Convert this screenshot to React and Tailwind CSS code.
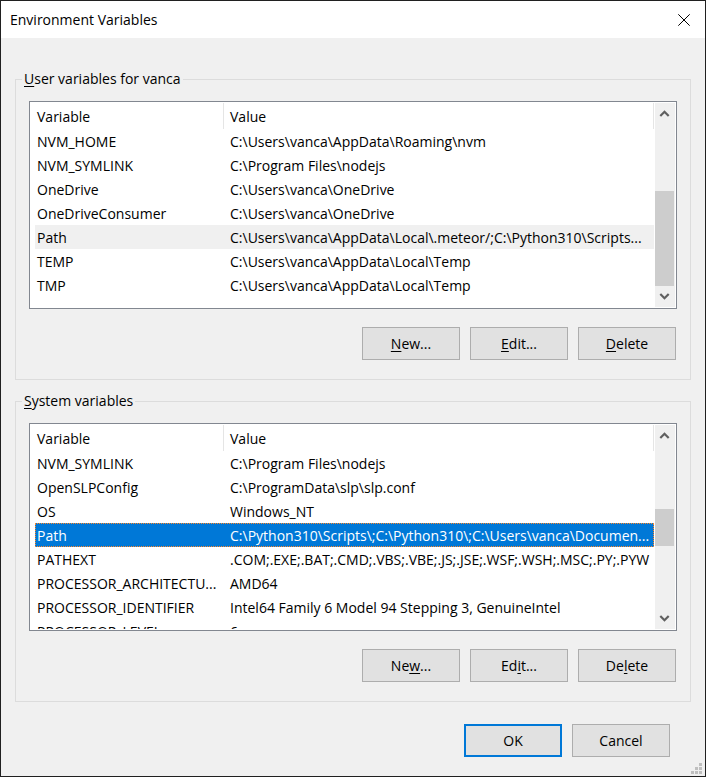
import { useId } from "react";

const userVariables = [
  ["NVM_HOME", "C:\\Users\\vanca\\AppData\\Roaming\\nvm"],
  ["NVM_SYMLINK", "C:\\Program Files\\nodejs"],
  ["OneDrive", "C:\\Users\\vanca\\OneDrive"],
  ["OneDriveConsumer", "C:\\Users\\vanca\\OneDrive"],
  ["Path", "C:\\Users\\vanca\\AppData\\Local\\.meteor/;C:\\Python310\\Scripts..."],
  ["TEMP", "C:\\Users\\vanca\\AppData\\Local\\Temp"],
  ["TMP", "C:\\Users\\vanca\\AppData\\Local\\Temp"],
];

const systemVariables = [
  ["NVM_SYMLINK", "C:\\Program Files\\nodejs"],
  ["OpenSLPConfig", "C:\\ProgramData\\slp\\slp.conf"],
  ["OS", "Windows_NT"],
  ["Path", "C:\\Python310\\Scripts\\;C:\\Python310\\;C:\\Users\\vanca\\Documen..."],
  ["PATHEXT", ".COM;.EXE;.BAT;.CMD;.VBS;.VBE;.JS;.JSE;.WSF;.WSH;.MSC;.PY;.PYW"],
  ["PROCESSOR_ARCHITECTU...", "AMD64"],
  ["PROCESSOR_IDENTIFIER", "Intel64 Family 6 Model 94 Stepping 3, GenuineIntel"],
  ["PROCESSOR_LEVEL", "6"],
];

// Underlines the access key of a label, e.g. hotkey 2 in "Edit..." marks the "i".
function Mnemonic({ text, hotkey }) {
  return (
    <>
      {text.slice(0, hotkey)}
      <span className="underline decoration-1 underline-offset-2">{text[hotkey]}</span>
      {text.slice(hotkey + 1)}
    </>
  );
}

function Button({ primary, children }) {
  return (
    <button
      type="button"
      className={
        "h-[33px] w-[98px] bg-[#e1e1e1] text-center " +
        (primary ? "border-2 border-[#0078d7]" : "border border-[#adadad]")
      }
    >
      {children}
    </button>
  );
}

function ScrollArrow({ label, d }) {
  return (
    <button type="button" aria-label={label} className="h-5 w-[19px] shrink-0">
      <svg className="block" width="19" height="20" viewBox="0 0 19 20" fill="none" stroke="#606060" strokeWidth="2.2">
        <path d={d} />
      </svg>
    </button>
  );
}

function VariableList({ labelledBy, rows, selected, focused, thumbClass }) {
  return (
    <div className="flex h-[208px] border border-[#828790] bg-white">
      <div className="my-px min-w-0 flex-1 overflow-hidden pl-[5px]">
        <table aria-labelledby={labelledBy} className="w-full table-fixed border-separate border-spacing-0">
          <colgroup>
            <col className="w-[189px]" />
            <col />
          </colgroup>
          <thead>
            <tr className="h-[26px]">
              <th className="border-r border-[#e5e5e5] p-0 pt-[2px] pl-[2px] text-left font-normal">Variable</th>
              <th className="border-r border-[#e5e5e5] p-0 pt-[2px] pl-[6px] text-left font-normal">Value</th>
            </tr>
          </thead>
          <tbody>
            {rows.map(([name, value], i) => (
              <tr
                key={name}
                className={
                  "h-6 " +
                  (i !== selected
                    ? ""
                    : focused
                      ? "bg-[#0078d7] text-white outline-1 -outline-offset-1 outline-dotted outline-[#ff8728]"
                      : "bg-[#f0f0f0]")
                }
              >
                <td className="overflow-hidden p-0 pt-[2px] pl-[2px] whitespace-nowrap">{name}</td>
                <td className="overflow-hidden p-0 pt-[2px] pl-[6px] whitespace-nowrap">{value}</td>
              </tr>
            ))}
          </tbody>
        </table>
      </div>
      <div className="m-px flex w-5 flex-col justify-between bg-[#f0f0f0]">
        <ScrollArrow label="Scroll up" d="M5.300 13 9.500 8.800l4.200 4.200" />
        <div className="flex-1">
          <div className={"w-[19px] bg-[#cdcdcd] " + thumbClass} />
        </div>
        <ScrollArrow label="Scroll down" d="M5.300 7 9.500 11.200l4.200-4.200" />
      </div>
    </div>
  );
}

function VariableGroup({ title, hotkeys, ...list }) {
  const id = useId();
  return (
    <fieldset className="min-w-0 border border-[#dcdcdc]">
      <legend id={id} className="ml-[6px] px-[2px]">
        <Mnemonic text={title} hotkey={0} />
      </legend>
      <div className="px-[13px] pt-3 pb-[19px]">
        <VariableList labelledBy={id} {...list} />
        <div className="mt-[18px] flex justify-end gap-[10px] pr-px">
          <Button><Mnemonic text="New..." hotkey={hotkeys[0]} /></Button>
          <Button><Mnemonic text="Edit..." hotkey={hotkeys[1]} /></Button>
          <Button><Mnemonic text="Delete" hotkey={hotkeys[2]} /></Button>
        </div>
      </div>
    </fieldset>
  );
}

export default function App() {
  return (
    <div className="relative flex min-h-screen flex-col border border-[#202020] bg-[#f0f0f0] font-['Open_Sans','Noto_Sans',sans-serif] text-[14px] leading-5 text-black">
      <header className="flex h-[37px] items-center justify-between bg-white pr-[15px] pl-[9px]">
        <h1>Environment Variables</h1>
        <button type="button" aria-label="Close">
          <svg className="block" width="12" height="12" viewBox="0 0 12 12" stroke="#000" strokeWidth="1">
            <path d="M.3.3l11.400 11.400M11.700.3.3 11.700" />
          </svg>
        </button>
      </header>
      <main className="flex flex-col px-[14px] pt-[31px]">
        <div className="flex flex-col gap-[11px]">
          <VariableGroup
            title="User variables for vanca"
            hotkeys={[0, 0, 0]}
            rows={userVariables}
            selected={4}
            thumbClass="mt-[68px] h-[95px]"
          />
          <VariableGroup
            title="System variables"
            hotkeys={[2, 2, 2]}
            rows={systemVariables}
            selected={3}
            focused
            thumbClass="mt-16 h-[37px]"
          />
        </div>
        <div className="mt-[22px] flex justify-end gap-[10px] pr-[21px]">
          <Button primary>OK</Button>
          <Button>Cancel</Button>
        </div>
      </main>
      <svg
        aria-hidden="true"
        className="absolute right-[3px] bottom-[2px]"
        width="11"
        height="11"
        viewBox="0 0 11 11"
        fill="#bfbfbf"
      >
        <path d="M8 0h3v3H8zM4 4h3v3H4zM8 4h3v3H8zM0 8h3v3H0zM4 8h3v3H4zM8 8h3v3H8z" />
      </svg>
    </div>
  );
}
